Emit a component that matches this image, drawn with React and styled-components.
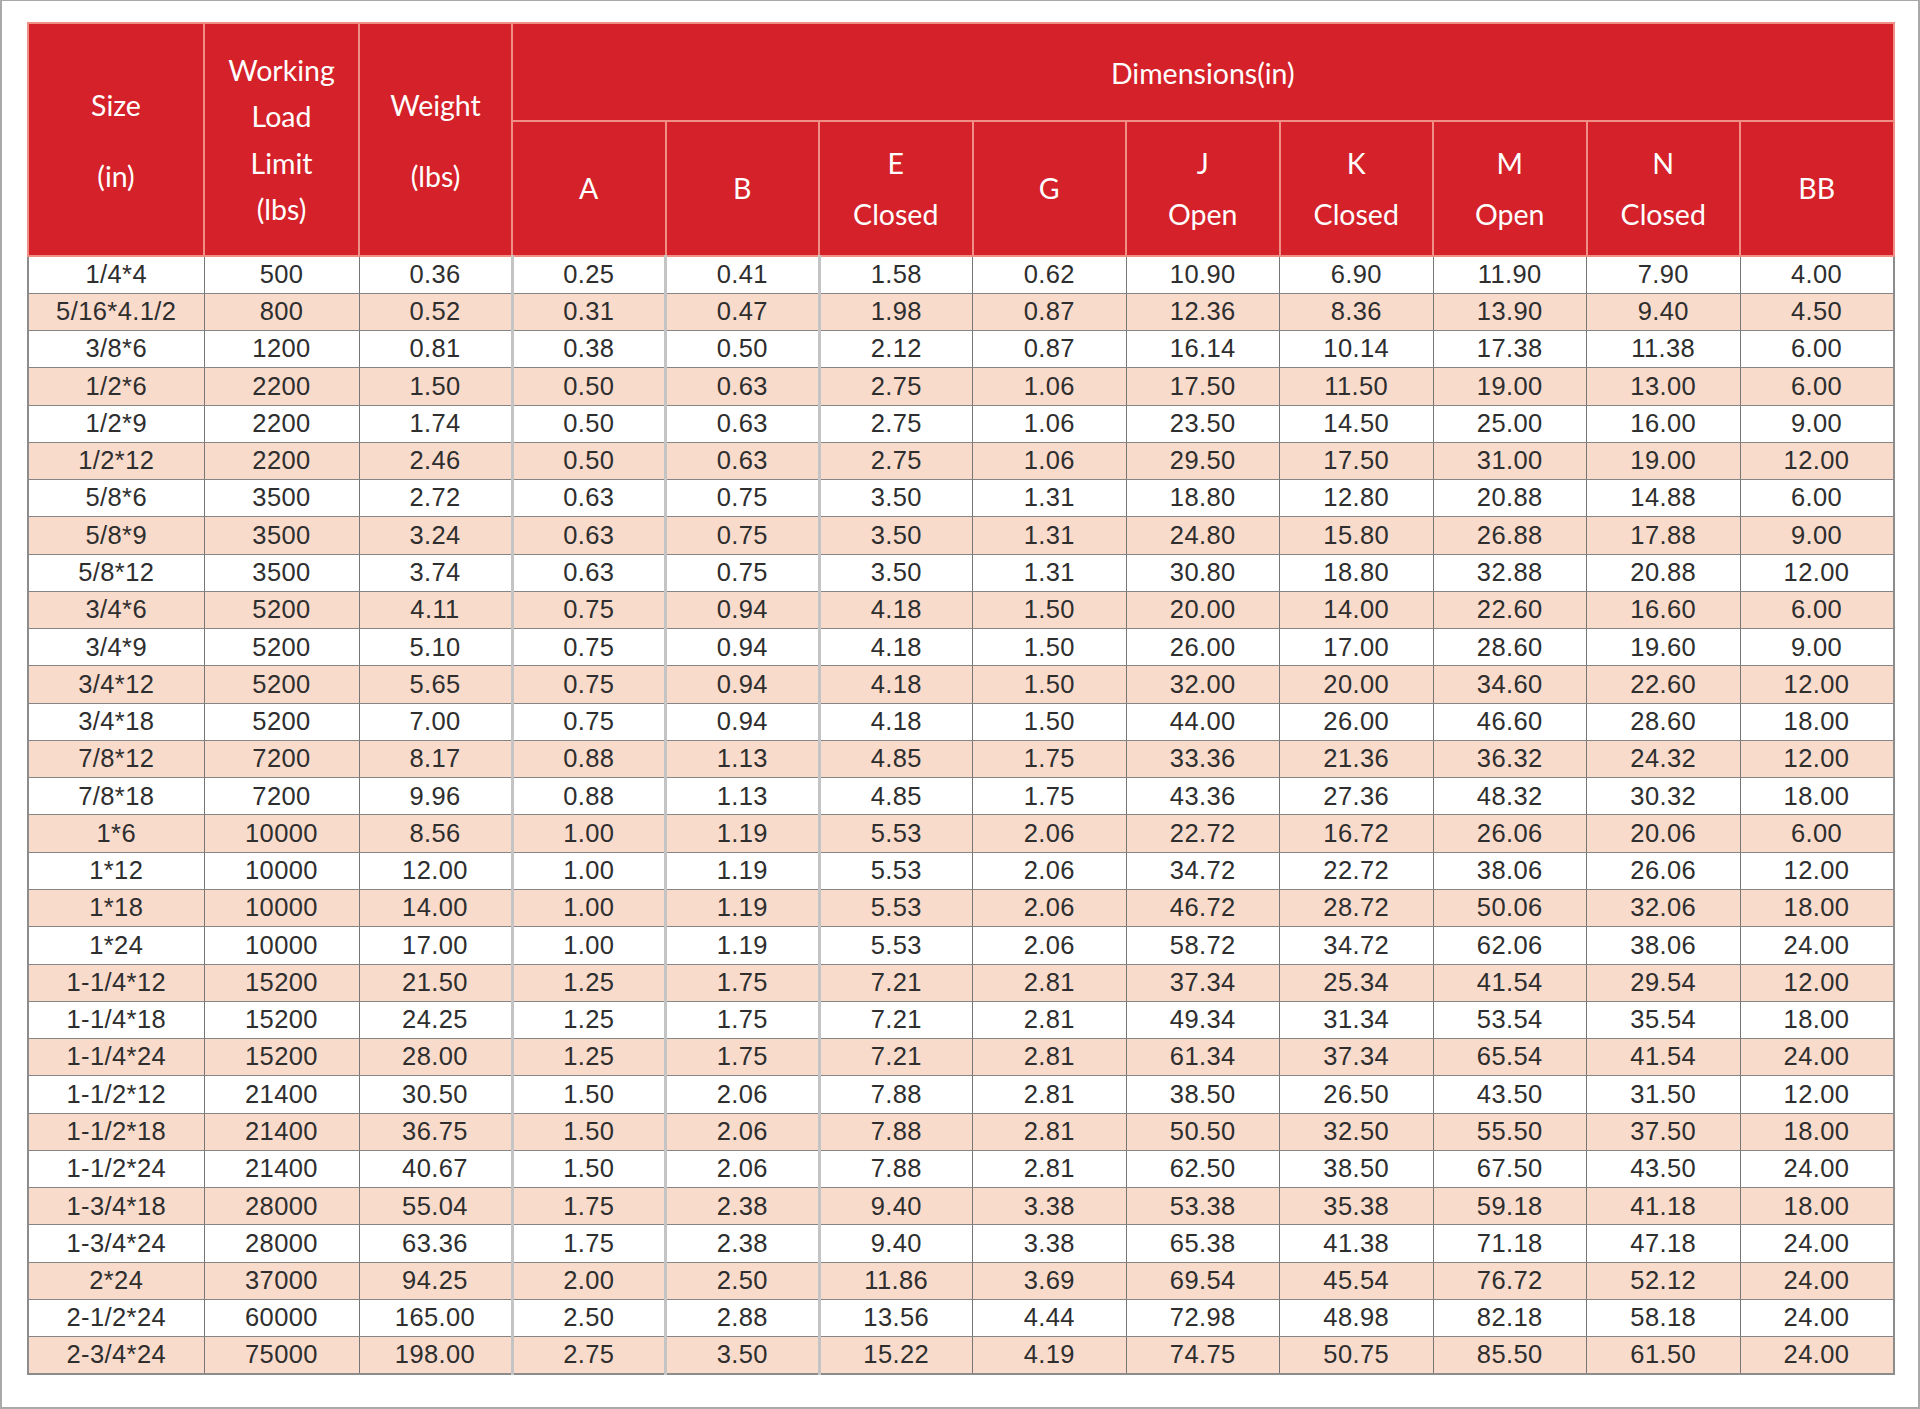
import React from "react";
import styled, { createGlobalStyle } from "styled-components";

const Global = createGlobalStyle`
  html, body { margin: 0; padding: 0; background: #fff; }
  * { box-sizing: border-box; }
`;

const Frame = styled.div`
  width: 1920px;
  height: 1409px;
  border: 2px solid #a9a9a9;
  border-top-width: 1px;
  padding: 21px 0 0 25px;
  background: #fff;
`;

const Table = styled.table`
  width: 1866px;
  table-layout: fixed;
  border-collapse: collapse;
  border: 2px solid #8c8c8c;
`;

const HeadCell = styled.th`
  background: #d52129;
  color: #fff;
  font-family: Lato, "Open Sans", sans-serif;
  font-weight: 400;
  font-size: 28.5px;
  text-align: center;
  vertical-align: middle;
  border: 2px solid #ef8f86;
  padding: 0;
  height: ${(p) => p.$h || "auto"};
`;

const Lines = styled.div`
  display: flex;
  flex-direction: column;
  align-items: center;
  gap: ${(p) => p.$gap}px;
  line-height: 1;
  padding-top: ${(p) => p.$shift || 0}px;
`;

const DataRow = styled.tr`
  background: ${(p) => (p.$alt ? "#f9dbcc" : "#ffffff")};
  height: 37.27px;
`;

const DataCell = styled.td`
  font-family: "Liberation Sans", Arial, sans-serif;
  font-size: 25.5px;
  letter-spacing: 0.4px;
  color: #2e2e2e;
  text-align: center;
  vertical-align: middle;
  padding: 0;
  line-height: 1;
  border-top: 1.5px solid #858585;
  border-bottom: 1.5px solid #858585;
  border-left: ${(p) => (p.$soft ? "3px solid #c4c4c4" : "1.5px solid #767676")};
  border-right: 1.5px solid #767676;
`;

const widths = [176, 155, 153, 153.5, 153.5, 153.5, 153.5, 153.5, 153.5, 153.5, 153.5, 153.5];

const dims = [
  ["A"],
  ["B"],
  ["E", "Closed"],
  ["G"],
  ["J", "Open"],
  ["K", "Closed"],
  ["M", "Open"],
  ["N", "Closed"],
  ["BB"],
];

const raw = `1/4*4 500 0.36 0.25 0.41 1.58 0.62 10.90 6.90 11.90 7.90 4.00
5/16*4.1/2 800 0.52 0.31 0.47 1.98 0.87 12.36 8.36 13.90 9.40 4.50
3/8*6 1200 0.81 0.38 0.50 2.12 0.87 16.14 10.14 17.38 11.38 6.00
1/2*6 2200 1.50 0.50 0.63 2.75 1.06 17.50 11.50 19.00 13.00 6.00
1/2*9 2200 1.74 0.50 0.63 2.75 1.06 23.50 14.50 25.00 16.00 9.00
1/2*12 2200 2.46 0.50 0.63 2.75 1.06 29.50 17.50 31.00 19.00 12.00
5/8*6 3500 2.72 0.63 0.75 3.50 1.31 18.80 12.80 20.88 14.88 6.00
5/8*9 3500 3.24 0.63 0.75 3.50 1.31 24.80 15.80 26.88 17.88 9.00
5/8*12 3500 3.74 0.63 0.75 3.50 1.31 30.80 18.80 32.88 20.88 12.00
3/4*6 5200 4.11 0.75 0.94 4.18 1.50 20.00 14.00 22.60 16.60 6.00
3/4*9 5200 5.10 0.75 0.94 4.18 1.50 26.00 17.00 28.60 19.60 9.00
3/4*12 5200 5.65 0.75 0.94 4.18 1.50 32.00 20.00 34.60 22.60 12.00
3/4*18 5200 7.00 0.75 0.94 4.18 1.50 44.00 26.00 46.60 28.60 18.00
7/8*12 7200 8.17 0.88 1.13 4.85 1.75 33.36 21.36 36.32 24.32 12.00
7/8*18 7200 9.96 0.88 1.13 4.85 1.75 43.36 27.36 48.32 30.32 18.00
1*6 10000 8.56 1.00 1.19 5.53 2.06 22.72 16.72 26.06 20.06 6.00
1*12 10000 12.00 1.00 1.19 5.53 2.06 34.72 22.72 38.06 26.06 12.00
1*18 10000 14.00 1.00 1.19 5.53 2.06 46.72 28.72 50.06 32.06 18.00
1*24 10000 17.00 1.00 1.19 5.53 2.06 58.72 34.72 62.06 38.06 24.00
1-1/4*12 15200 21.50 1.25 1.75 7.21 2.81 37.34 25.34 41.54 29.54 12.00
1-1/4*18 15200 24.25 1.25 1.75 7.21 2.81 49.34 31.34 53.54 35.54 18.00
1-1/4*24 15200 28.00 1.25 1.75 7.21 2.81 61.34 37.34 65.54 41.54 24.00
1-1/2*12 21400 30.50 1.50 2.06 7.88 2.81 38.50 26.50 43.50 31.50 12.00
1-1/2*18 21400 36.75 1.50 2.06 7.88 2.81 50.50 32.50 55.50 37.50 18.00
1-1/2*24 21400 40.67 1.50 2.06 7.88 2.81 62.50 38.50 67.50 43.50 24.00
1-3/4*18 28000 55.04 1.75 2.38 9.40 3.38 53.38 35.38 59.18 41.18 18.00
1-3/4*24 28000 63.36 1.75 2.38 9.40 3.38 65.38 41.38 71.18 47.18 24.00
2*24 37000 94.25 2.00 2.50 11.86 3.69 69.54 45.54 76.72 52.12 24.00
2-1/2*24 60000 165.00 2.50 2.88 13.56 4.44 72.98 48.98 82.18 58.18 24.00
2-3/4*24 75000 198.00 2.75 3.50 15.22 4.19 74.75 50.75 85.50 61.50 24.00`;

const rows = raw.split("\n").map((l) => l.trim().split(/\s+/));

const softCols = new Set([3, 4, 5]);

export default function App() {
  return (
    <>
      <Global />
      <Frame>
        <Table>
          <colgroup>
            {widths.map((w, i) => (
              <col key={i} style={{ width: `${w}px` }} />
            ))}
          </colgroup>
          <thead>
            <tr>
              <HeadCell rowSpan={2}>
                <Lines $gap={43} $shift={2}>
                  <span>Size</span>
                  <span>(in)</span>
                </Lines>
              </HeadCell>
              <HeadCell rowSpan={2}>
                <Lines $gap={18}>
                  <span>Working</span>
                  <span>Load</span>
                  <span>Limit</span>
                  <span>(lbs)</span>
                </Lines>
              </HeadCell>
              <HeadCell rowSpan={2}>
                <Lines $gap={43} $shift={2}>
                  <span>Weight</span>
                  <span>(lbs)</span>
                </Lines>
              </HeadCell>
              <HeadCell colSpan={9} $h="98px">
                <Lines $gap={0} $shift={2}>
                  <span>Dimensions(in)</span>
                </Lines>
              </HeadCell>
            </tr>
            <tr>
              {dims.map((d, i) => (
                <HeadCell key={i} $h="135px">
                  <Lines $gap={22}>
                    {d.map((t) => (
                      <span key={t}>{t}</span>
                    ))}
                  </Lines>
                </HeadCell>
              ))}
            </tr>
          </thead>
          <tbody>
            {rows.map((r, ri) => (
              <DataRow key={ri} $alt={ri % 2 === 1}>
                {r.map((v, ci) => (
                  <DataCell key={ci} $soft={softCols.has(ci)}>
                    {v}
                  </DataCell>
                ))}
              </DataRow>
            ))}
          </tbody>
        </Table>
      </Frame>
    </>
  );
}
